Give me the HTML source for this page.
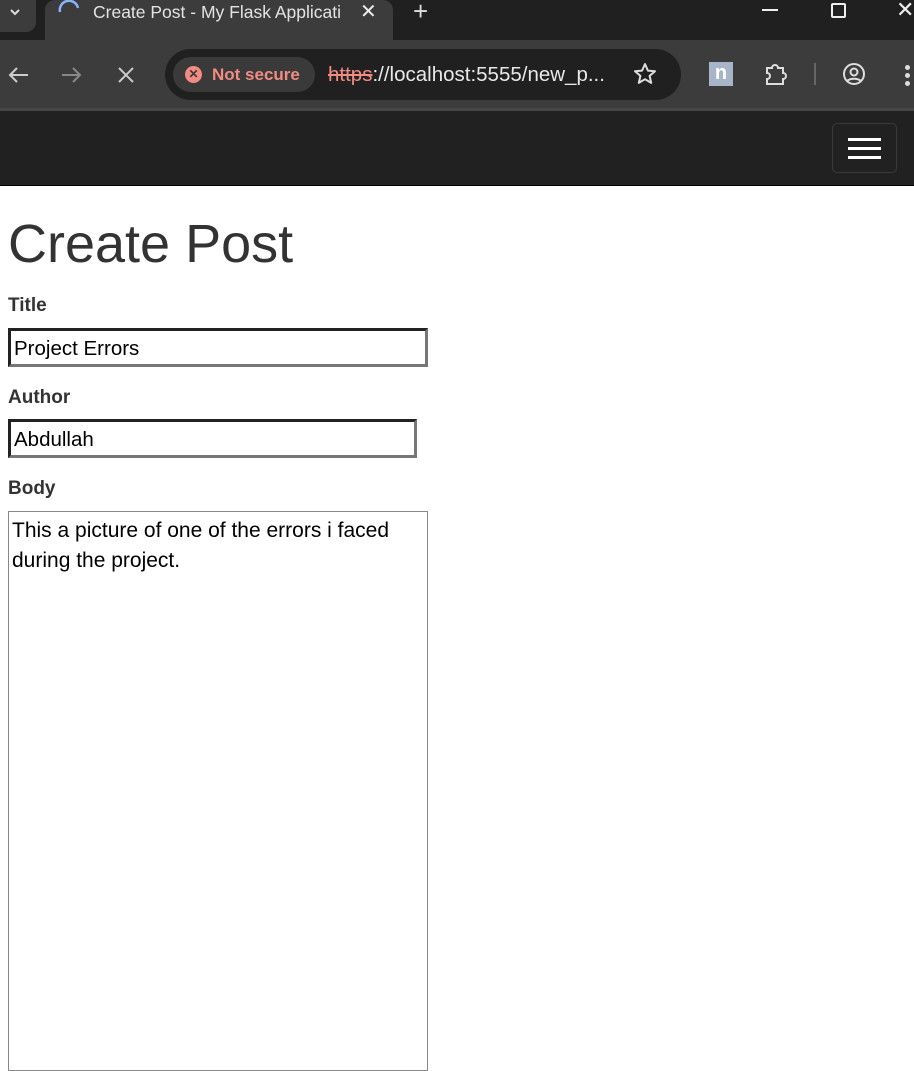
<!DOCTYPE html>
<html><head><style>
*{box-sizing:border-box;margin:0;padding:0}
body{width:914px;height:1061px;overflow:hidden;background:#fff;font-family:"Liberation Sans",sans-serif;position:relative}
.a{position:absolute}
</style></head><body>
<div class="a" style="left:0;top:0;width:914px;height:40px;background:#202020"></div>
<div class="a" style="left:0;top:0;width:36px;height:32px;background:#3c3c3c;border-radius:0 0 10px 0"></div>
<svg class="a" style="left:8px;top:5px" width="14" height="14"><path d="M3 5l4 4 4-4" stroke="#ddd" stroke-width="2" fill="none"/></svg>
<div class="a" style="left:45px;top:0;width:348px;height:41px;background:#3c3c3c;border-radius:10px 10px 0 0"></div>
<svg class="a" style="left:57px;top:-2px" width="26" height="20"><path d="M3 14A9 9 0 0 1 21 10" stroke="#8ab4f8" stroke-width="2.5" fill="none"/></svg>
<div class="a" style="left:93px;top:2px;font-size:17.5px;color:#e3e3e3;white-space:nowrap;width:250px;overflow:hidden">Create Post - My Flask Applicati</div>
<div class="a" style="left:360px;top:-1px;font-size:20px;color:#eee">✕</div>
<div class="a" style="left:413px;top:-4px;font-size:26px;color:#ddd">+</div>
<div class="a" style="left:762px;top:9px;width:16px;height:2px;background:#eee"></div>
<div class="a" style="left:831px;top:3px;width:15px;height:15px;border:2px solid #eee;border-radius:2px"></div>
<div class="a" style="left:896px;top:-3px;font-size:22px;color:#eee">✕</div>
<div class="a" style="left:0;top:40px;width:914px;height:70px;background:#3c3c3c"></div>
<div class="a" style="left:0;top:108px;width:914px;height:3px;background:#464646"></div>
<svg class="a" style="left:6px;top:63px" width="130" height="24"><path d="M22 12H4M11 5l-7 7 7 7" stroke="#ccc" stroke-width="2" fill="none"/><path d="M56 12h18M67 5l7 7-7 7" stroke="#888" stroke-width="2" fill="none"/><path d="M113 5l14 14M127 5l-14 14" stroke="#ccc" stroke-width="2" fill="none"/></svg>
<div class="a" style="left:165px;top:49px;width:516px;height:51px;background:#202020;border-radius:26px"></div>
<div class="a" style="left:173px;top:57px;width:142px;height:35px;background:#3a3a3a;border-radius:18px"></div>
<div class="a" style="left:185px;top:66px;width:17px;height:17px;background:#f28b82;border-radius:50%;color:#3a3a3a;font-size:12px;font-weight:bold;text-align:center;line-height:17px">✕</div>
<div class="a" style="left:212px;top:65px;font-size:17px;font-weight:bold;color:#f28b82">Not secure</div>
<div class="a" style="left:328px;top:63px;font-size:20.5px;color:#e8e8e8;white-space:nowrap"><span style="color:#f28b82;text-decoration:line-through">https</span>://localhost:5555/new_p...</div>
<svg class="a" style="left:633px;top:62px" width="24" height="24"><path d="M12 2l2.9 6.6 7.1.6-5.4 4.7 1.6 7-6.2-3.7-6.2 3.7 1.6-7L2 9.2l7.1-.6z" stroke="#ddd" stroke-width="2" fill="none" stroke-linejoin="round"/></svg>
<div class="a" style="left:709px;top:62px;width:24px;height:24px;background:#a8b4c8;color:#fff;font-weight:bold;text-align:center;font-size:20px;line-height:22px">n</div>
<svg class="a" style="left:763px;top:61px" width="26" height="26"><path d="M4 7h5a3 3 0 0 1 6 0h5v5a3 3 0 0 1 0 6v5H4v-5a3 3 0 0 0 0-6z" stroke="#ddd" stroke-width="2" fill="none"/></svg>
<div class="a" style="left:814px;top:63px;width:2px;height:22px;background:#666"></div>
<svg class="a" style="left:841px;top:61px" width="26" height="26"><circle cx="13" cy="13" r="10" stroke="#ddd" stroke-width="2" fill="none"/><circle cx="13" cy="11" r="3.5" stroke="#ddd" stroke-width="2" fill="none"/><path d="M6 20a9 6 0 0 1 14 0" stroke="#ddd" stroke-width="2" fill="none"/></svg>
<div class="a" style="left:905px;top:65px;width:5px;height:5px;background:#ddd;border-radius:50%;box-shadow:0 8px 0 #ddd,0 16px 0 #ddd"></div>
<div class="a" style="left:0;top:111px;width:914px;height:75px;background:#212121;border-bottom:1px solid #000"></div>
<div class="a" style="left:832px;top:123px;width:65px;height:50px;border:1px solid #3a3a3a;border-radius:5px"></div>
<div class="a" style="left:848px;top:138px;width:33px;height:3px;background:#fff;box-shadow:0 9px 0 #fff,0 18px 0 #fff"></div>
<div class="a" style="left:8px;top:213px;font-size:54px;color:#333">Create Post</div>
<div class="a" style="left:8px;top:295px;font-size:19px;font-weight:bold;color:#333">Title</div>
<div class="a" style="left:8px;top:328px;width:420px;height:39px;border:3px solid;border-color:#222 #777 #777 #222;padding:6px 3px 0;font-size:20.5px;color:#000">Project Errors</div>
<div class="a" style="left:8px;top:387px;font-size:19px;font-weight:bold;color:#333">Author</div>
<div class="a" style="left:8px;top:419px;width:409px;height:39px;border:3px solid;border-color:#222 #777 #777 #222;padding:6px 3px 0;font-size:20.5px;color:#000">Abdullah</div>
<div class="a" style="left:8px;top:478px;font-size:19px;font-weight:bold;color:#333">Body</div>
<div class="a" style="left:8px;top:511px;width:420px;height:560px;border:1px solid #888;padding:4px 3px;font-size:21px;line-height:30px;color:#000">This a picture of one of the errors i faced during the project.</div>
</body></html>
